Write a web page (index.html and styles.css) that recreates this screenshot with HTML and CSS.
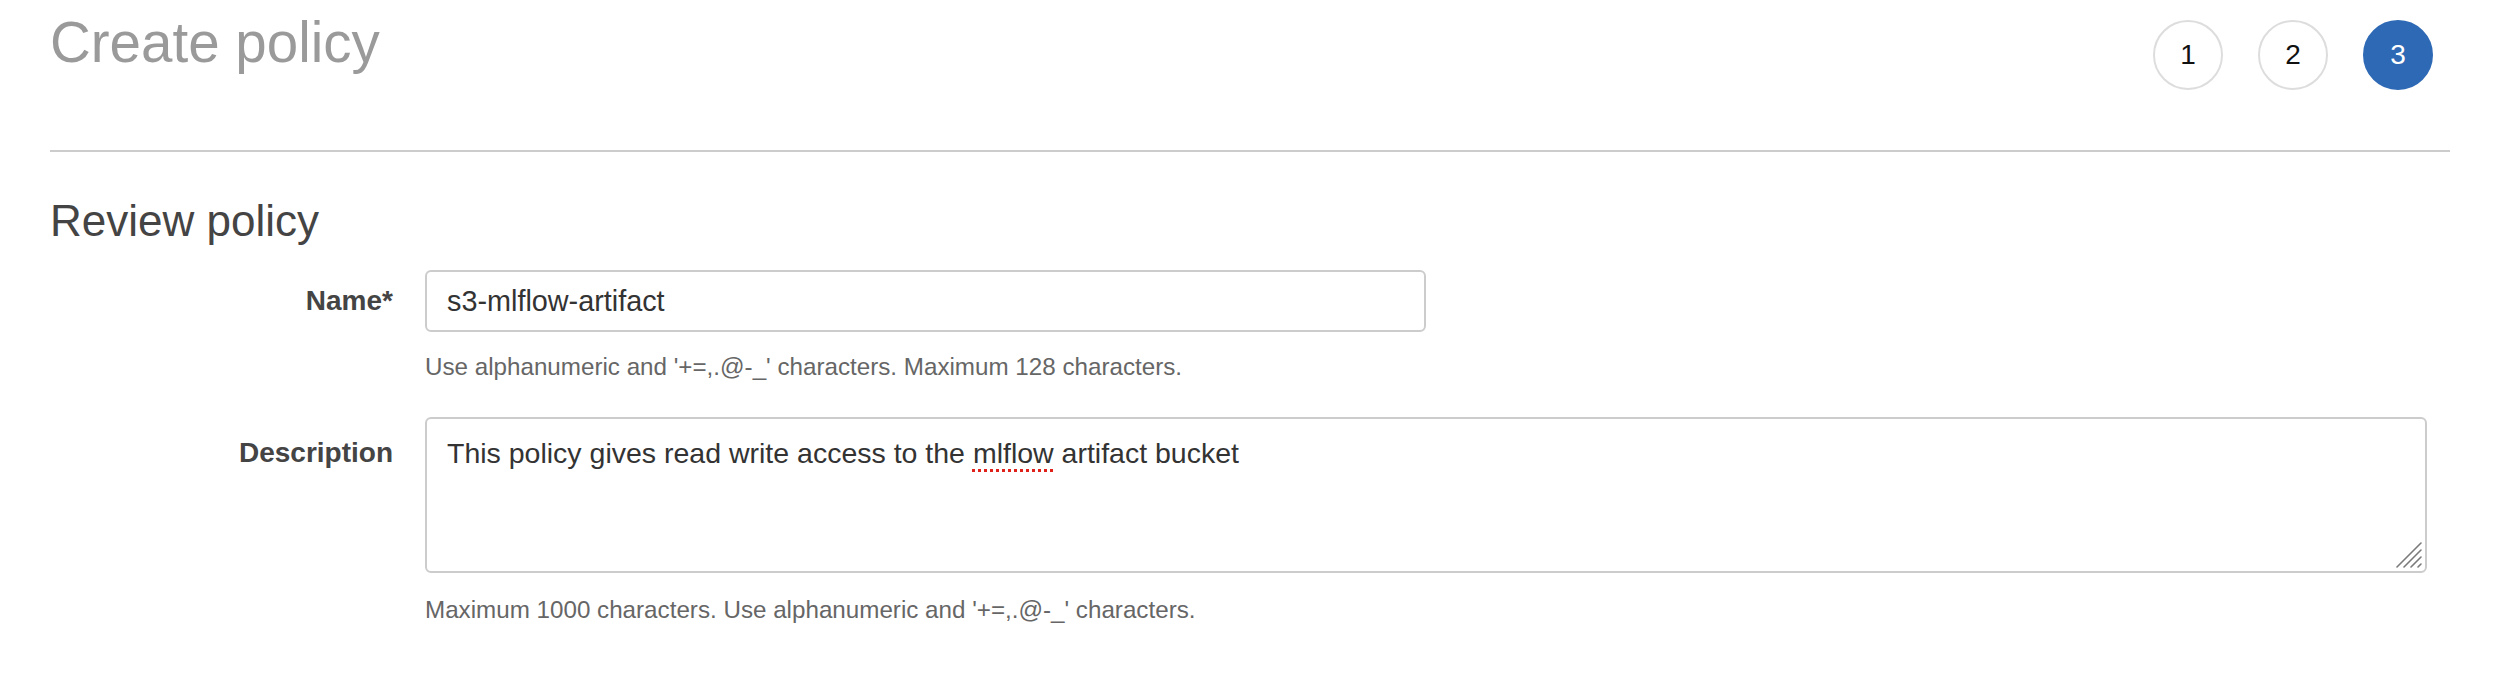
FILE: index.html
```html
<!DOCTYPE html>
<html lang="en">
<head>
<meta charset="utf-8">
<title>Create policy</title>
<link rel="stylesheet" href="styles.css">
</head>
<body>
<div class="page">
  <header class="header">
    <h1 class="title">Create policy</h1>
    <ol class="steps">
      <li class="step">1</li>
      <li class="step">2</li>
      <li class="step active">3</li>
    </ol>
  </header>

  <h2 class="section-title">Review policy</h2>

  <div class="form">
    <div class="label label-name">Name*</div>
    <div class="field">
      <input class="input" type="text" value="s3-mlflow-artifact" spellcheck="false">
      <div class="help help-name">Use alphanumeric and '+=,.@-_' characters. Maximum 128 characters.</div>
    </div>

    <div class="label label-desc">Description</div>
    <div class="field">
      <div class="textarea" role="textbox" aria-multiline="true">This policy gives read write access to the <span class="misspelled">mlflow</span> artifact bucket<svg class="grip" width="26" height="26" viewBox="0 0 26 26" aria-hidden="true"><g stroke="#7a7a7a" stroke-width="1.6" stroke-linecap="round"><line x1="1" y1="25" x2="25" y2="1"/><line x1="8" y1="25" x2="25" y2="8"/><line x1="15" y1="25" x2="25" y2="15"/><line x1="22" y1="25" x2="25" y2="22"/></g></svg></div>
      <div class="help help-desc">Maximum 1000 characters. Use alphanumeric and '+=,.@-_' characters.</div>
    </div>
  </div>
</div>
</body>
</html>
```

FILE: styles.css
```css
* {
  box-sizing: border-box;
}

html, body {
  margin: 0;
  padding: 0;
  background: #ffffff;
}

body {
  font-family: "Liberation Sans", Arial, Helvetica, sans-serif;
  color: #444444;
}

.page {
  padding: 0 46px 0 50px;
}

.header {
  display: flex;
  justify-content: space-between;
  align-items: flex-start;
  padding-top: 15px;
  padding-bottom: 60px;
  border-bottom: 2px solid #cccccc;
}

.title {
  margin: 0;
  font-size: 56.5px;
  line-height: 56px;
  font-weight: 400;
  color: #9a9a9a;
}

.steps {
  display: flex;
  gap: 35px;
  margin: 5px 17px 0 0;
  padding: 0;
  list-style: none;
}

.step {
  width: 70px;
  height: 70px;
  border: 2px solid #dddddd;
  border-radius: 50%;
  display: flex;
  align-items: center;
  justify-content: center;
  font-size: 28px;
  color: #111111;
  background: #ffffff;
}

.step.active {
  background: #2e69b5;
  border-color: #2e69b5;
  color: #ffffff;
}

.section-title {
  margin: 47px 0 0 0;
  font-size: 44px;
  line-height: 44px;
  font-weight: 400;
  color: #444444;
}

.form {
  display: grid;
  grid-template-columns: 343px 1fr;
  column-gap: 32px;
  row-gap: 33px;
  margin-top: 27px;
}

.label {
  text-align: right;
  font-size: 28px;
  font-weight: 700;
  color: #444444;
}

.label-name {
  line-height: 62px;
}

.label-desc {
  line-height: 1.4;
  padding-top: 16px;
}

.field {
  display: flex;
  flex-direction: column;
}

.input {
  width: 1001px;
  height: 62px;
  margin: 0;
  padding: 0 20px;
  border: 2px solid #cccccc;
  border-radius: 6px;
  font-family: inherit;
  font-size: 28.8px;
  color: #333333;
  background: #ffffff;
  outline: none;
}

.textarea {
  position: relative;
  width: 2002px;
  height: 156px;
  padding: 15px 20px;
  border: 2px solid #cccccc;
  border-radius: 6px;
  font-size: 28.5px;
  line-height: 1.4;
  color: #333333;
  background: #ffffff;
}

.misspelled {
  text-decoration: underline dotted #e0201b;
  text-decoration-thickness: 3px;
  text-underline-offset: 6px;
}

.grip {
  position: absolute;
  right: 3px;
  bottom: 3px;
}

.help {
  font-size: 24.2px;
  line-height: 34px;
  color: #666666;
}

.help-name {
  margin-top: 18px;
}

.help-desc {
  margin-top: 20px;
}
```
